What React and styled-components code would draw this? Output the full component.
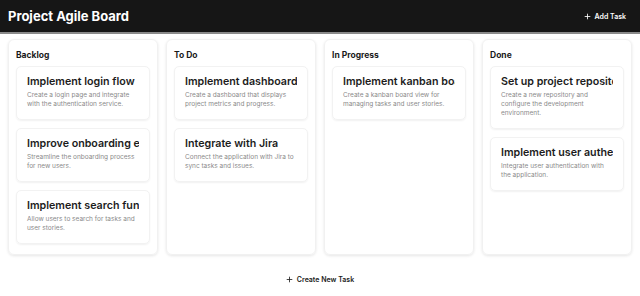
import React from 'react';
import styled, { createGlobalStyle } from 'styled-components';

const GlobalStyle = createGlobalStyle`
  body {
    margin: 0;
    background: #ffffff;
    font-family: Inter, "Liberation Sans", sans-serif;
  }
`;

const Page = styled.div`
  width: 640px;
  height: 296px;
  display: flex;
  flex-direction: column;
  overflow: hidden;
`;

const Header = styled.header`
  height: 32px;
  background-color: #161616;
  border-bottom: 2px solid #8a8a8a;
  display: flex;
  align-items: center;
  justify-content: space-between;
  padding: 0 14px 0 8px;
`;

const Title = styled.h1`
  margin: 0;
  font-size: 13px;
  font-weight: 700;
  color: #fff;
`;

const TextButton = styled.button`
  border: none;
  background: transparent;
  display: flex;
  align-items: center;
  gap: 4px;
  padding: 0;
  font-family: inherit;
  font-size: 7px;
  font-weight: 600;
  color: ${props => (props.dark ? '#ffffff' : '#222222')};
`;

const Board = styled.div`
  display: grid;
  grid-template-columns: repeat(4, 150px);
  gap: 8px;
  padding: 5px 8px 0;
`;

const Column = styled.section`
  height: 216px;
  box-sizing: border-box;
  padding: 10px 7px 8px;
  border-radius: 6px;
  border: 1px solid #f1f1f1;
  box-shadow: 0 1px 3px rgba(0, 0, 0, 0.1);
`;

const ColumnTitle = styled.h2`
  margin: 0 0 6px;
  font-size: 8.5px;
  line-height: 10px;
  font-weight: 700;
  color: #1a1a1a;
`;

const CardList = styled.div`
  display: flex;
  flex-direction: column;
  gap: 8px;
`;

const Card = styled.div`
  padding: 8px 10px 10px;
  border-radius: 5px;
  border: 1px solid #f2f2f2;
  box-shadow: 0 1px 2px rgba(0, 0, 0, 0.06);
`;

const CardTitle = styled.h3`
  margin: 0 0 2px;
  font-size: 10.7px;
  line-height: 14px;
  font-weight: 600;
  color: #1c1c1c;
  white-space: nowrap;
  overflow: hidden;
`;

const CardText = styled.p`
  margin: 0;
  font-size: 6.5px;
  line-height: 9px;
  color: #8a8a8a;
`;

const Footer = styled.div`
  display: flex;
  justify-content: center;
  padding-top: 20px;
`;

const Plus = ({ color }) => (
  <svg width="7" height="7" viewBox="0 0 10 10" fill="none" stroke={color} strokeWidth="1.2">
    <path d="M5 1v8M1 5h8" />
  </svg>
);

const columns = [
  {
    title: 'Backlog',
    tasks: [
      { title: 'Implement login flow', text: 'Create a login page and integrate with the authentication service.' },
      { title: 'Improve onboarding experience', text: 'Streamline the onboarding process for new users.' },
      { title: 'Implement search functionality', text: 'Allow users to search for tasks and user stories.' },
    ],
  },
  {
    title: 'To Do',
    tasks: [
      { title: 'Implement dashboard', text: 'Create a dashboard that displays project metrics and progress.' },
      { title: 'Integrate with Jira', text: 'Connect the application with Jira to sync tasks and issues.' },
    ],
  },
  {
    title: 'In Progress',
    tasks: [
      { title: 'Implement kanban board', text: 'Create a kanban board view for managing tasks and user stories.' },
    ],
  },
  {
    title: 'Done',
    tasks: [
      { title: 'Set up project repository', text: 'Create a new repository and configure the development environment.' },
      { title: 'Implement user authentication', text: 'Integrate user authentication with the application.' },
    ],
  },
];

const App = () => (
  <Page>
    <GlobalStyle />
    <Header>
      <Title>Project Agile Board</Title>
      <TextButton dark>
        <Plus color="#ffffff" />
        Add Task
      </TextButton>
    </Header>
    <Board>
      {columns.map(col => (
        <Column key={col.title}>
          <ColumnTitle>{col.title}</ColumnTitle>
          <CardList>
            {col.tasks.map(task => (
              <Card key={task.title}>
                <CardTitle>{task.title}</CardTitle>
                <CardText>{task.text}</CardText>
              </Card>
            ))}
          </CardList>
        </Column>
      ))}
    </Board>
    <Footer>
      <TextButton>
        <Plus color="#222222" />
        Create New Task
      </TextButton>
    </Footer>
  </Page>
);

export default App;
